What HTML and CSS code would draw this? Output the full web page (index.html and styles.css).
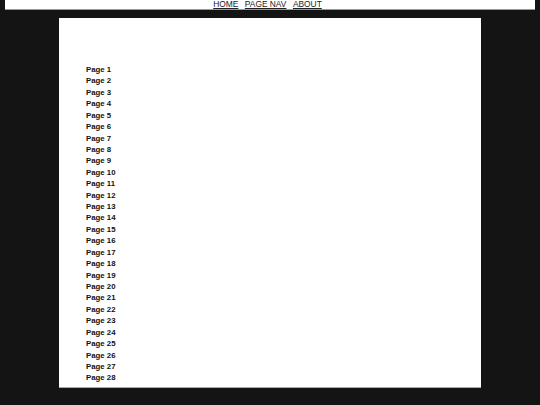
FILE: index.html
```html
<!doctype html>
<html lang="en">
	<head>
		<title>Page Nav</title>
		<meta charset="utf-8">
		<link rel="stylesheet" href="styles.css">
	</head>
<body>

	<div id="top_nav">
		<a href="#">HOME</a>
		<a href="#">PAGE NAV</a>
		<a href="#">ABOUT</a>
	</div>

	<div id="content">
		<ul class="pages">
			<li>Page 1</li>
			<li>Page 2</li>
			<li>Page 3</li>
			<li>Page 4</li>
			<li>Page 5</li>
			<li>Page 6</li>
			<li>Page 7</li>
			<li>Page 8</li>
			<li>Page 9</li>
			<li>Page 10</li>
			<li>Page 11</li>
			<li>Page 12</li>
			<li>Page 13</li>
			<li>Page 14</li>
			<li>Page 15</li>
			<li>Page 16</li>
			<li>Page 17</li>
			<li>Page 18</li>
			<li>Page 19</li>
			<li>Page 20</li>
			<li>Page 21</li>
			<li>Page 22</li>
			<li>Page 23</li>
			<li>Page 24</li>
			<li>Page 25</li>
			<li>Page 26</li>
			<li>Page 27</li>
			<li>Page 28</li>
		</ul>
	</div>

</body>
</html>
```

FILE: styles.css
```css
body { background:#141414; margin: 0; font-family: "Liberation Sans", Arial, sans-serif; }

#top_nav { background: #fff; margin: 0 5px; padding-right: 5px; border-bottom: 1px solid #999; display: flex; justify-content: center; gap: 6.5px; font-size: 8.4px; line-height: 9px; }
#top_nav a { color: #222; text-decoration: underline; }

#content { background: #fff; width: 422px; margin: 8px auto 0; padding: 46px 0 3px 27px; box-sizing: border-box; border-bottom: 1px solid #aaa; }

.pages { list-style: none; margin: 0; padding: 0; font-size: 7.8px; font-weight: bold; line-height: 11.42px; color: #111; }
```
